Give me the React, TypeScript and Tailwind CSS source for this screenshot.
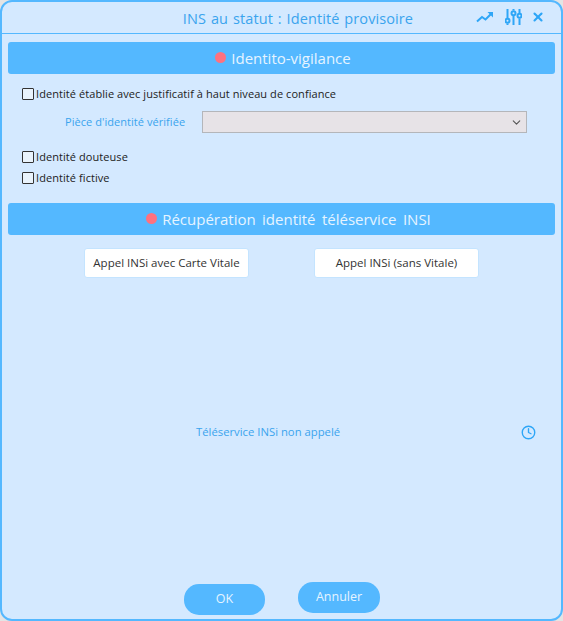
import { ChevronDown, Clock, X } from 'lucide-react';

const font = "font-['Open_Sans','Noto_Sans',sans-serif]";

function SectionHeader({ title, spaced }: { title: string; spaced?: boolean }) {
  return (
    <div className={`flex h-8 items-center justify-center gap-[5px] rounded-[3px] bg-[#54b8ff] text-[15px] text-[#e6f4ff] ${spaced ? 'pl-[14px] text-[14.2px] [word-spacing:2.5px]' : 'pl-[3px]'}`}>
      <span className="mb-0.5 h-[11px] w-[11px] rounded-full bg-[#ff717f]" />
      <span>{title}</span>
    </div>
  );
}

function CheckRow({ label }: { label: string }) {
  return (
    <div className="flex h-4 items-center gap-[2px] text-[11px] tracking-[0.07px] text-[#222222]">
      <span className="h-[12px] w-[12px] rounded-[1px] border border-[#333333] bg-[#e9f3fc]" />
      <span>{label}</span>
    </div>
  );
}

function CallButton({ label }: { label: string }) {
  return (
    <button className="h-[30px] w-[165px] rounded-[3px] border border-[#c4e4ff] bg-white text-[11.5px] text-[#333333]">
      {label}
    </button>
  );
}

function TrendIcon() {
  return (
    <svg width="18" height="12" viewBox="0 0 18 12" fill="none">
      <path d="M1 10.5 L6 6 L9.5 8.5 L15 3" stroke="currentColor" strokeWidth="2" />
      <path d="M11.5 1 H17 V6.5 Z" fill="currentColor" />
    </svg>
  );
}

function SlidersIcon() {
  return (
    <svg width="17" height="18" viewBox="0 0 17 18" fill="none" stroke="currentColor" strokeWidth="2">
      <path d="M2.5 1 V10 M2.5 15.5 V17 M8.5 1 V2.5 M8.5 8 V17 M14.5 1 V5 M14.5 10.5 V17" />
      <circle cx="2.5" cy="12.8" r="2" />
      <circle cx="8.5" cy="5.2" r="2" />
      <circle cx="14.5" cy="7.8" r="2" />
    </svg>
  );
}

export default function App() {
  return (
    <div className={`h-[621px] w-[563px] bg-[#e4e4e4] ${font}`}>
      <div className="flex h-[621px] flex-col rounded-[12px] border-2 border-[#54b8ff] bg-[#d4e9ff]">
        {/* Title bar */}
        <div className="relative flex h-[32px] shrink-0 items-center justify-center border-b border-[#54b8ff] pt-0.5 pl-[33px] text-[14.5px] text-[#3aa4ee]">
          <span className="tracking-[0.1px] [word-spacing:1px]">INS au statut : Identité provisoire</span>
          <div className="absolute top-[6px] right-[16px] flex items-center gap-[11px] text-[#2ea6f7]">
            <TrendIcon />
            <SlidersIcon />
            <X size={14} strokeWidth={3.6} className="-ml-[2px]" />
          </div>
        </div>

        <div className="flex flex-1 flex-col px-[6px] pt-[8px]">
          <SectionHeader title="Identito-vigilance" />

          {/* Identito-vigilance form */}
          <div className="pt-[12px] pl-[14px]">
            <CheckRow label="Identité établie avec justificatif à haut niveau de confiance" />
            <div className="mt-[9px] flex items-center">
              <span className="ml-[43px] w-[137px] text-[11px] tracking-[0.05px] text-[#3aa4ee]">Pièce d'identité vérifiée</span>
              <div className="flex h-[22px] w-[325px] items-center justify-end border border-[#b4b6ba] bg-[#e7e3e7] pr-[3px] text-[#555555]">
                <ChevronDown size={13} />
              </div>
            </div>
            <div className="mt-[16px]"><CheckRow label="Identité douteuse" /></div>
            <div className="mt-[5px]"><CheckRow label="Identité fictive" /></div>
          </div>

          <div className="mt-[17px]">
            <SectionHeader title="Récupération identité téléservice INSI" spaced />
          </div>

          <div className="mt-[13px] flex gap-[65px] pl-[76px]">
            <CallButton label="Appel INSi avec Carte Vitale" />
            <CallButton label="Appel INSi (sans Vitale)" />
          </div>

          {/* Statut du téléservice */}
          <div className="mt-[144px] flex h-5 items-center pr-[19px] pl-[188px] text-[11.3px] text-[#3aa4ee]">
            <span className="flex-1">Téléservice INSi non appelé</span>
            <Clock size={15} strokeWidth={2.2} className="text-[#2ea6f7]" />
          </div>

          {/* Footer */}
          <div className="mt-[140px] flex items-start gap-[33px] pl-[176px] text-[12.5px] text-[#e6f4ff]">
            <button className="mt-[2px] h-[31px] w-[81px] rounded-[15px] bg-[#54b8ff]">OK</button>
            <button className="h-[31px] w-[82px] rounded-[15px] bg-[#54b8ff]">Annuler</button>
          </div>
        </div>
      </div>
    </div>
  );
}
